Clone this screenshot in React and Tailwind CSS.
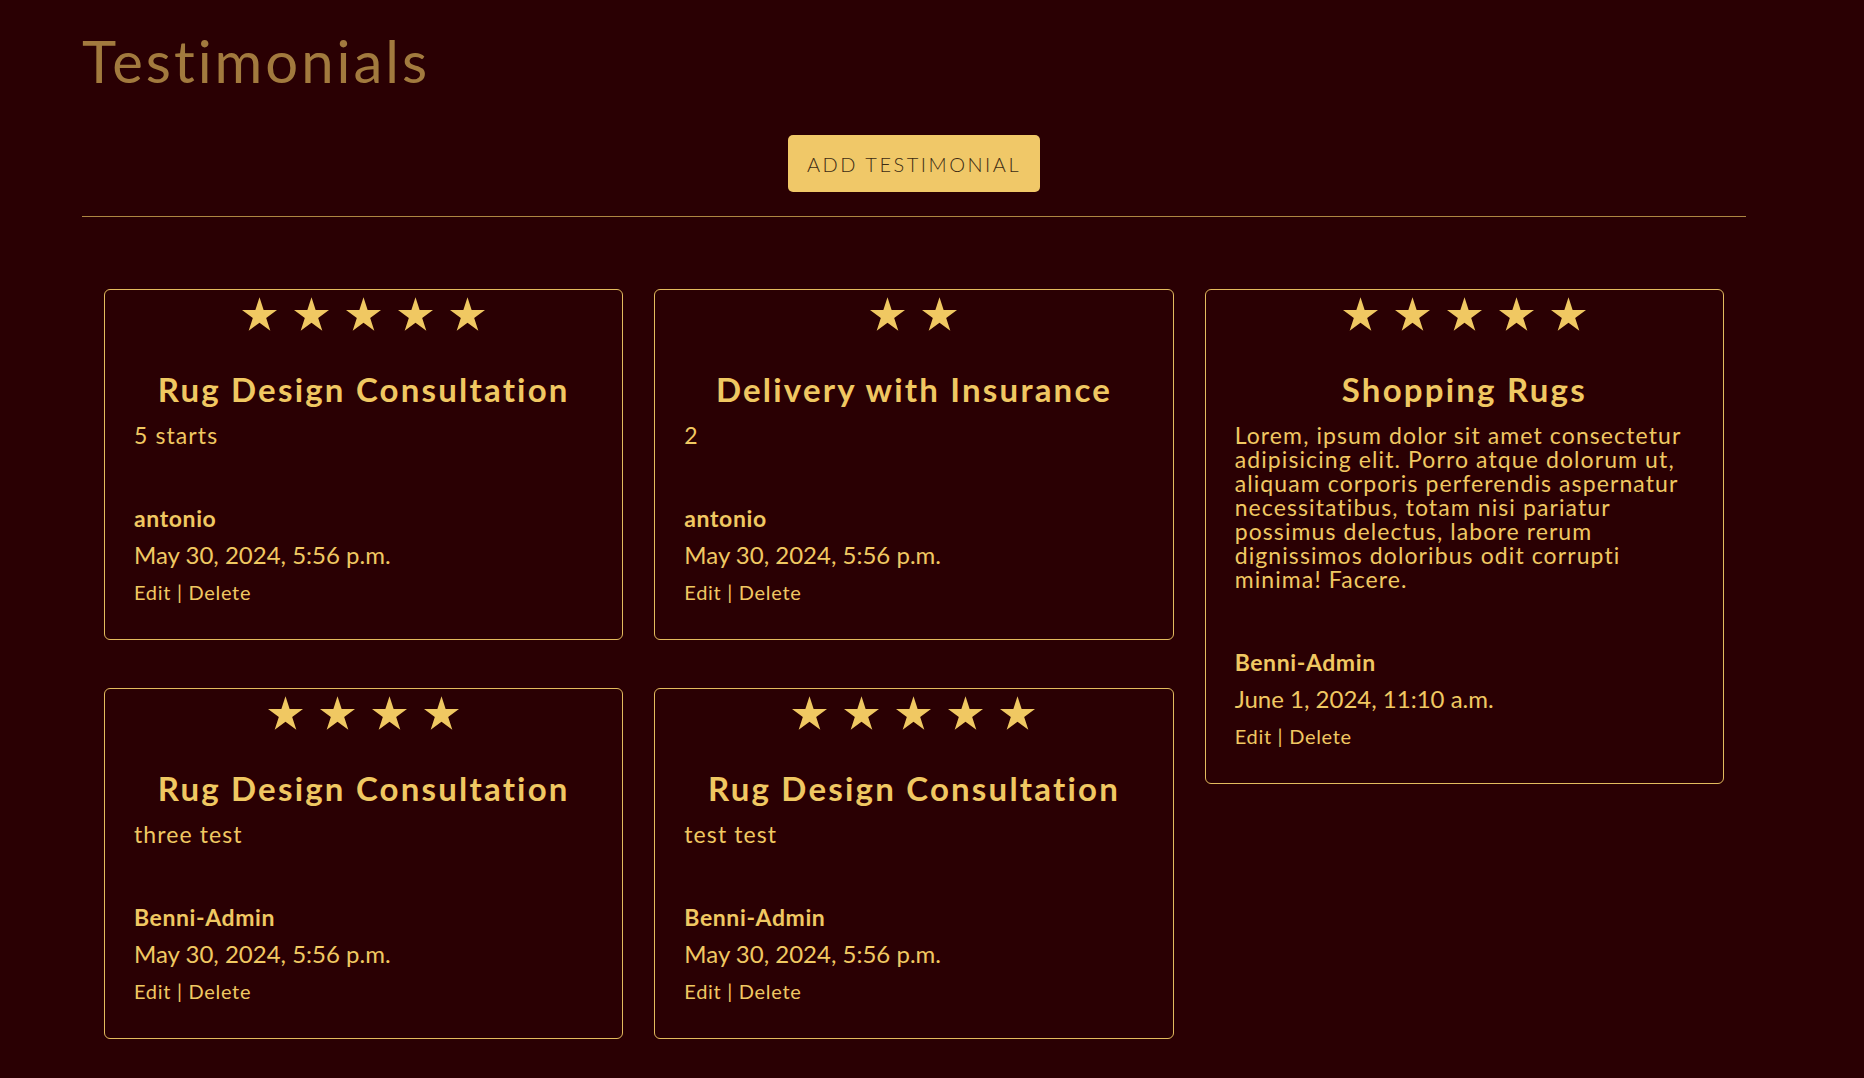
import React from "react";

const testimonials = [
  {
    id: 1,
    rating: 5,
    title: "Rug Design Consultation",
    text: "5 starts",
    author: "antonio",
    date: "May 30, 2024, 5:56 p.m.",
  },
  {
    id: 2,
    rating: 4,
    title: "Rug Design Consultation",
    text: "three test",
    author: "Benni-Admin",
    date: "May 30, 2024, 5:56 p.m.",
  },
  {
    id: 3,
    rating: 2,
    title: "Delivery with Insurance",
    text: "2",
    author: "antonio",
    date: "May 30, 2024, 5:56 p.m.",
  },
  {
    id: 4,
    rating: 5,
    title: "Rug Design Consultation",
    text: "test test",
    author: "Benni-Admin",
    date: "May 30, 2024, 5:56 p.m.",
  },
  {
    id: 5,
    rating: 5,
    title: "Shopping Rugs",
    text: "Lorem, ipsum dolor sit amet consectetur adipisicing elit. Porro atque dolorum ut, aliquam corporis perferendis aspernatur necessitatibus, totam nisi pariatur possimus delectus, labore rerum dignissimos doloribus odit corrupti minima! Facere.",
    author: "Benni-Admin",
    date: "June 1, 2024, 11:10 a.m.",
  },
];

// columns laid out like the masonry view on the site
const columns = [[1, 2], [3, 4], [5]];

const Star = () => (
  <svg viewBox="0 0 95.1 90.45" className="w-[35px] h-[34px]">
    <polygon
      fill="#f0c862"
      points="47.55,0 58.78,34.55 95.1,34.55 65.72,55.9 76.94,90.45 47.55,69.1 18.16,90.45 29.38,55.9 0,34.55 36.32,34.55"
    />
  </svg>
);

const Card = ({ item }) => (
  <div className="border border-[#e3bb5e] rounded-[6px] px-[29px] pt-[7px] pb-[35px] text-[#f0c862]">
    {/* Stars */}
    <div className="flex justify-center gap-[17px]">
      {Array.from({ length: item.rating }).map((_, i) => (
        <Star key={i} />
      ))}
    </div>

    <h3 className="mt-[38px] text-center text-[33px] leading-[40px] font-bold tracking-[2.2px]">
      {item.title}
    </h3>
    <p className="mt-[14px] text-[23px] leading-[24px] tracking-[1.1px]">
      {item.text}
    </p>

    <p className="mt-[59px] text-[23px] leading-[24px] font-bold tracking-[0.6px]">
      {item.author}
    </p>
    <p className="mt-[11px] text-[24px] leading-[28px]">{item.date}</p>
    <p className="mt-[11px] text-[20px] leading-[24px] tracking-[0.7px]">
      <a href="#" className="hover:underline">
        Edit
      </a>{" "}
      |{" "}
      <a href="#" className="hover:underline">
        Delete
      </a>
    </p>
  </div>
);

const App = () => {
  const byId = (id) => testimonials.find((t) => t.id === id);

  return (
    <div className="min-h-screen bg-[#2a0003] font-['Lato',sans-serif]">
      <div className="ml-[82px] w-[1664px] pt-[26px]">
        <h1 className="text-[58px] leading-[70px] text-[#a27a3e] tracking-[3px]">
          Testimonials
        </h1>

        <div className="flex justify-center mt-[39px]">
          <button className="w-[252px] h-[57px] rounded-[5px] bg-[#f0c868] text-[#3d2c14] text-[20px] font-light tracking-[2.5px] uppercase">
            Add Testimonial
          </button>
        </div>

        <hr className="mt-[24px] border-t border-[#ad8642]" />

        {/* Cards */}
        <div className="grid grid-cols-3 gap-[31px] px-[22px] mt-[72px] pb-[40px] items-start">
          {columns.map((col, ci) => (
            <div key={ci} className="flex flex-col gap-[48px]">
              {col.map((id) => (
                <Card key={id} item={byId(id)} />
              ))}
            </div>
          ))}
        </div>
      </div>
    </div>
  );
};

export default App;
